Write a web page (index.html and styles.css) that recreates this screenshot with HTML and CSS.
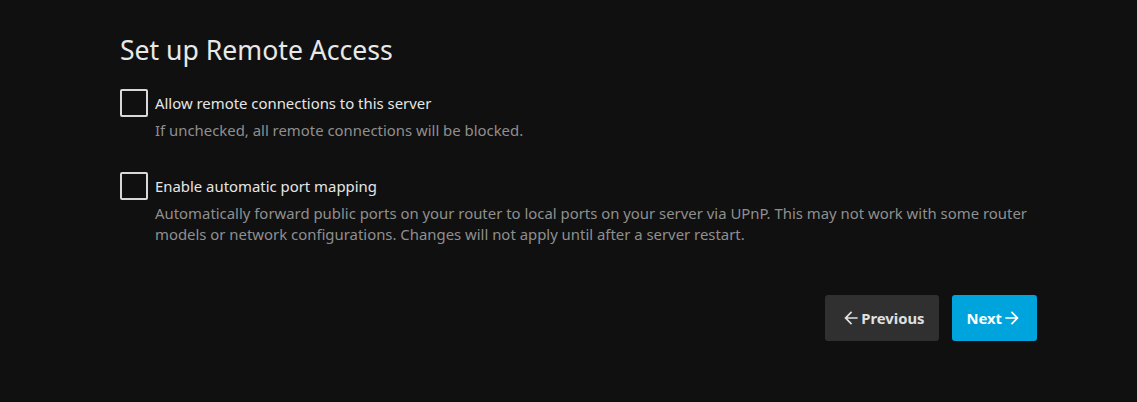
FILE: index.html
```html
<!DOCTYPE html>
<html>
<head>
<meta charset="utf-8">
<link rel="stylesheet" href="styles.css">
</head>
<body>
<div class="wizard">
  <h1 class="title">Set up Remote Access</h1>
  <div class="option">
    <label class="row">
      <span class="box"></span>
      <span class="label">Allow remote connections to this server</span>
    </label>
    <div class="desc">If unchecked, all remote connections will be blocked.</div>
  </div>
  <div class="option">
    <label class="row">
      <span class="box"></span>
      <span class="label">Enable automatic port mapping</span>
    </label>
    <div class="desc">Automatically forward public ports on your router to local ports on your server via UPnP. This may not work with some router models or network configurations. Changes will not apply until after a server restart.</div>
  </div>
  <div class="buttons">
    <button class="btn prev"><svg class="arrow" viewBox="0 0 24 24" width="20" height="20"><path d="M20 11H7.83l5.59-5.59L12 4l-8 8 8 8 1.41-1.41L7.83 13H20v-2z" fill="currentColor"/></svg>Previous</button>
    <button class="btn next">Next<svg class="arrow" viewBox="0 0 24 24" width="20" height="20"><path d="M12 4l-1.41 1.41L16.17 11H4v2h12.17l-5.58 5.59L12 20l8-8z" fill="currentColor"/></svg></button>
  </div>
</div>
</body>
</html>
```
FILE: styles.css
```css
html, body {
  margin: 0;
  background: #101010;
}
body {
  font-family: "Noto Sans", sans-serif;
  color: #e0e0e0;
}
.wizard {
  margin-left: 120px;
  width: 917px;
  padding-top: 31px;
}
.title {
  margin: 0 0 20px 0;
  font-size: 26.6px;
  font-weight: 400;
  line-height: 38px;
  color: #e8e8e8;
}
.option {
  margin-bottom: 31px;
}
.row {
  display: flex;
  align-items: center;
  gap: 7px;
}
.box {
  width: 24px;
  height: 24px;
  border: 2px solid #d8d8d8;
  border-radius: 2px;
  flex: none;
}
.label {
  font-size: 14.9px;
  color: #e6e6e6;
}
.desc {
  margin-left: 35px;
  margin-top: 3px;
  font-size: 14.9px;
  line-height: 21px;
  color: #8f8f8f;
}
.buttons {
  display: flex;
  justify-content: flex-end;
  gap: 13px;
  margin-top: 50px;
}
.btn {
  height: 46px;
  border: none;
  border-radius: 3px;
  font-family: "Noto Sans", sans-serif;
  font-weight: 700;
  font-size: 14.8px;
  display: flex;
  align-items: center;
  padding: 0 15px;
}
.prev {
  background: #303030;
  color: #e0e0e0;
  padding-left: 16px;
}
.next {
  background: #00a4dc;
  color: #fff;
  padding-left: 14px;
  padding-right: 15px;
}
```
